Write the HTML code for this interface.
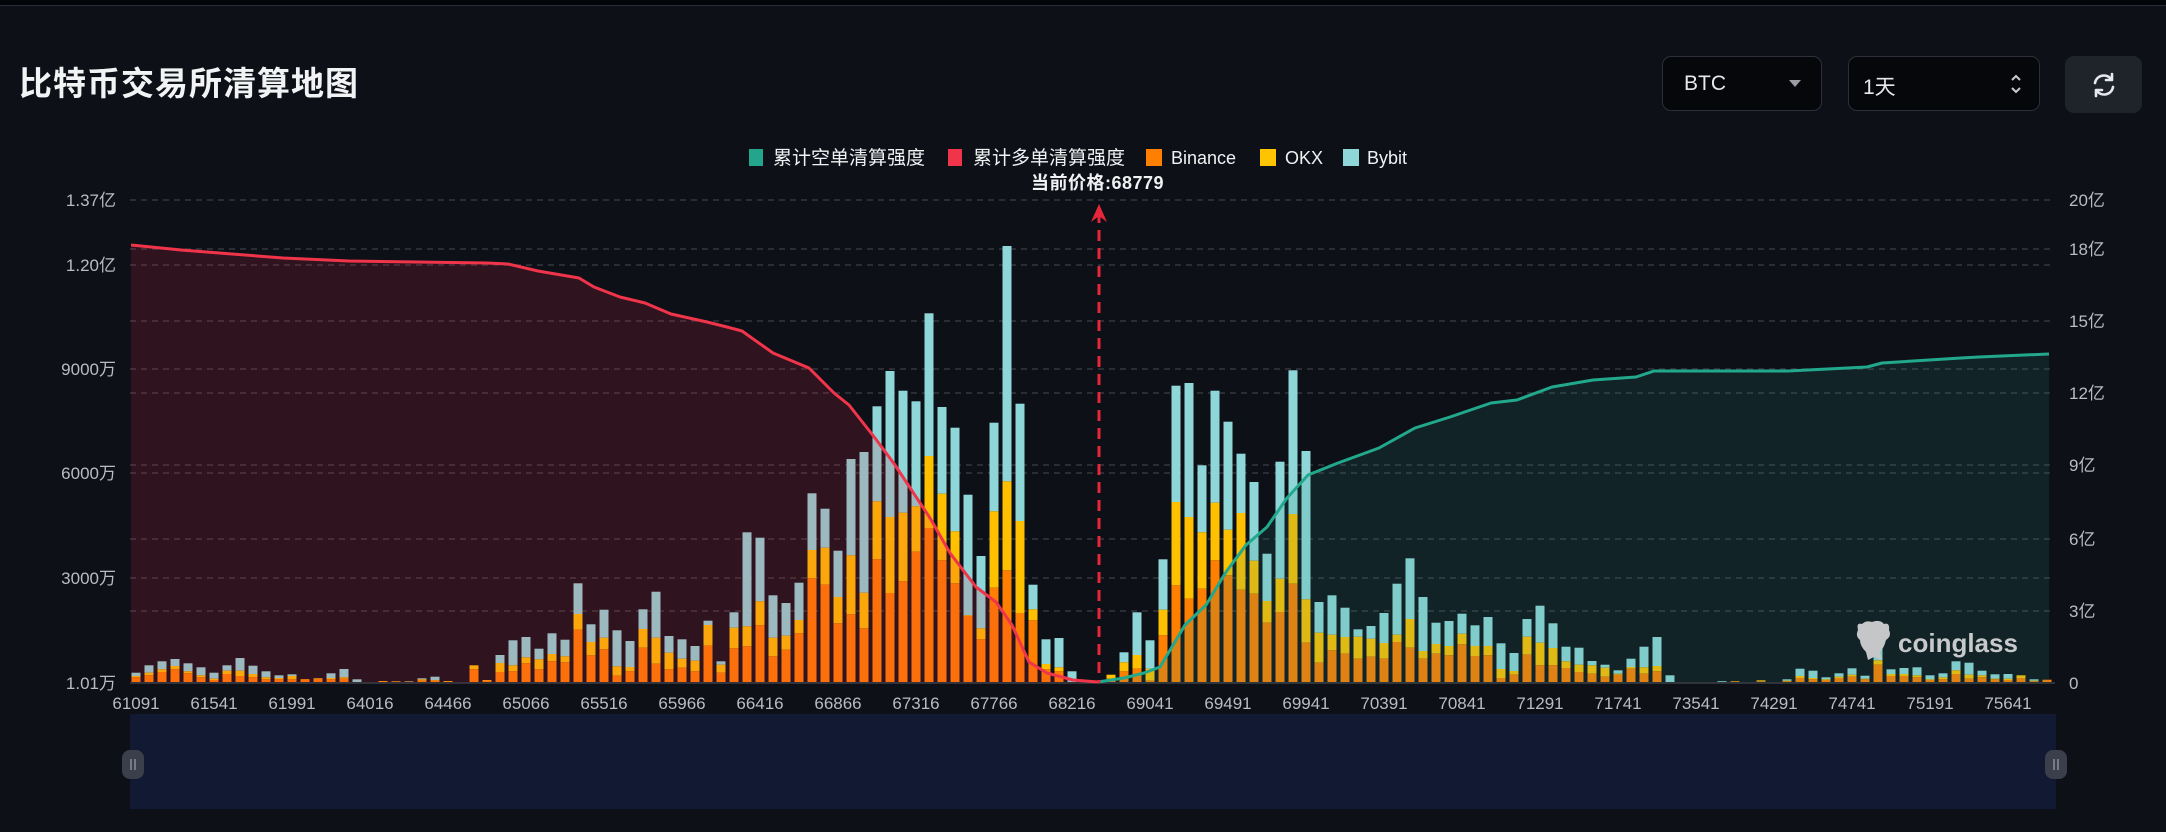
<!DOCTYPE html>
<html><head><meta charset="utf-8">
<style>
html,body{margin:0;padding:0;background:#0d1017;width:2166px;height:832px;overflow:hidden;font-family:"Liberation Sans","Noto Sans CJK SC",sans-serif;}
.topbar{position:absolute;left:0;top:0;width:2166px;height:5px;background:#04050a;border-bottom:1px solid #2a2d35;}
.title{position:absolute;left:19px;top:64px;font-size:33px;font-weight:bold;color:#f2f3f5;letter-spacing:1px;line-height:40px;}
.box{position:absolute;top:56px;height:55px;background:#05070b;border:1px solid #2c3038;border-radius:9px;box-sizing:border-box;color:#e6e8eb;font-size:21px;}
.btn{position:absolute;left:2065px;top:56px;width:77px;height:57px;background:#1f232a;border-radius:9px;}
</style></head><body>
<div class="topbar"></div>
<div class="title">比特币交易所清算地图</div>
<div class="box" style="left:1662px;width:160px;"><span style="position:absolute;left:21px;top:15px;">BTC</span>
<svg style="position:absolute;left:126px;top:23px" width="12" height="8"><path d="M0 0H12L6 7Z" fill="#9a9da4"/></svg></div>
<div class="box" style="left:1848px;width:192px;"><span style="position:absolute;left:14px;top:14px;">1天</span>
<svg style="position:absolute;left:160px;top:14px" width="14" height="26"><path d="M3 9L7 5L11 9M3 17L7 21L11 17" stroke="#c8cbd0" stroke-width="2" fill="none"/></svg></div>
<div class="btn"><svg style="position:absolute;left:25px;top:16px" width="28" height="26" viewBox="0 0 28 26"><path d="M5 11A9 9 0 0 1 21 7M23 15A9 9 0 0 1 7 19" stroke="#e6e8eb" stroke-width="2.6" fill="none" stroke-linecap="round"/><path d="M22 2V8H16" stroke="#e6e8eb" stroke-width="2.6" fill="none" stroke-linecap="round" stroke-linejoin="round"/><path d="M6 24V18H12" stroke="#e6e8eb" stroke-width="2.6" fill="none" stroke-linecap="round" stroke-linejoin="round"/></svg></div>

<svg id="c" style="position:absolute;left:0;top:0" width="2166" height="832" font-family="Liberation Sans, Noto Sans CJK SC, sans-serif">
<g id="grid" stroke="#34373f" stroke-width="1.5" stroke-dasharray="6,5">
<line x1="130" x2="2055" y1="200" y2="200"/><line x1="130" x2="2055" y1="249" y2="249"/><line x1="130" x2="2055" y1="265" y2="265"/><line x1="130" x2="2055" y1="321" y2="321"/><line x1="130" x2="2055" y1="369" y2="369"/><line x1="130" x2="2055" y1="393" y2="393"/><line x1="130" x2="2055" y1="465" y2="465"/><line x1="130" x2="2055" y1="473" y2="473"/><line x1="130" x2="2055" y1="539" y2="539"/><line x1="130" x2="2055" y1="578" y2="578"/><line x1="130" x2="2055" y1="611" y2="611"/>
</g>
<g id="bars"></g>
<path id="redA" fill="rgba(233,36,70,0.16)"/>
<path id="grnA" fill="rgba(40,150,136,0.15)"/>
<line x1="130" x2="2055" y1="683" y2="683" stroke="#3a3d45" stroke-width="1.5"/>
<path id="redL" fill="none" stroke="#f0354a" stroke-width="3" stroke-linejoin="round"/>
<path id="grnL" fill="none" stroke="#22a88c" stroke-width="3" stroke-linejoin="round"/>
<line x1="1099" x2="1099" y1="212" y2="683" stroke="#e8263a" stroke-width="3" stroke-dasharray="11,7"/>
<path d="M1091 222L1099 204L1107 222L1099 216Z" fill="#e8263a"/>
<g fill="#b9bcc3" font-size="17" text-anchor="end">
<text x="116" y="206">1.37亿</text><text x="116" y="271">1.20亿</text><text x="116" y="375">9000万</text><text x="116" y="479">6000万</text><text x="116" y="584">3000万</text><text x="116" y="689">1.01万</text>
</g>
<g fill="#b9bcc3" font-size="17">
<text x="2069" y="206">20亿</text><text x="2069" y="255">18亿</text><text x="2069" y="327">15亿</text><text x="2069" y="399">12亿</text><text x="2069" y="471">9亿</text><text x="2069" y="545">6亿</text><text x="2069" y="617">3亿</text><text x="2069" y="689">0</text>
</g>
<g id="xl" fill="#b9bcc3" font-size="17" text-anchor="middle"></g>
<g font-size="19" fill="#f0f1f3">
<rect x="749" y="149" width="14" height="17" fill="#22a58b"/><text x="773" y="164">累计空单清算强度</text>
<rect x="948" y="149" width="14" height="17" fill="#f0354a"/><text x="973" y="164">累计多单清算强度</text>
<rect x="1146" y="149" width="16" height="17" fill="#ff7f00"/><text x="1171" y="164" font-size="18">Binance</text>
<rect x="1260" y="149" width="16" height="17" fill="#ffc400"/><text x="1285" y="164" font-size="18">OKX</text>
<rect x="1343" y="149" width="16" height="17" fill="#8fd6d8"/><text x="1367" y="164" font-size="18">Bybit</text>
<text x="1031" y="189" font-size="18" font-weight="bold" letter-spacing="0.5">当前价格:68779</text>
</g>
<g fill="#c4c6c8">
<path d="M1858 630Q1856 622 1862 624Q1866 620 1872 622Q1880 619 1884 624Q1890 622 1889 630Q1892 636 1886 640Q1884 648 1880 652L1882 660L1874 657L1868 660L1866 652Q1860 646 1860 640Q1855 636 1858 630Z"/>
<text x="1898" y="652" font-size="26" font-weight="bold" fill="#c8c9cb">coinglass</text>
</g>
<rect x="130" y="714" width="1926" height="95" fill="#121a33"/>
<rect x="122" y="750" width="22" height="29" rx="8" fill="#3a3f4b"/>
<rect x="2045" y="750" width="22" height="29" rx="8" fill="#3a3f4b"/>
<g stroke="#8a8f9a" stroke-width="1.5"><line x1="131" x2="131" y1="759" y2="770"/><line x1="135" x2="135" y1="759" y2="770"/><line x1="2054" x2="2054" y1="759" y2="770"/><line x1="2058" x2="2058" y1="759" y2="770"/></g>
</svg>
<script>
var D=[[9.3,6,4.7],[16.7,9.3,6.7],[20.7,12.7,10],[23,16,12.7],[18.7,10.7,8.7],[14.7,6.7,4.7],[9.3,3.3,2],[16.7,11.3,8],[24,11.3,6],[16.3,8,4.7],
[10.7,4.7,2.7],[6.7,4,2.7],[7.7,6,2.7],[3,3,2.7],[3.7,3.7,3],[8.7,4,2.7],[13,4.7,3.3],[2.7,0,0],[0,0,0],[1,1,0.5],
[0.8,0.8,0.4],[0.8,0.5,0.3],[3.7,2.7,1.3],[5.3,2,1.3],[1,1,0.5],[0,0,0],[16.7,16.7,12.7],[2,2,1.5],[27,19,10],[41.7,16.7,10.7],
[45,24.7,18.7],[33.3,22.7,12.7],[48.7,28,20.7],[42.3,25.7,19.7],[98.7,68,52.3],[57.7,40,26.7],[72.3,44.3,32.7],[51.7,15.7,6.3],[41,15,10.7],[72.7,53,34.3],
[90.3,44.3,18.3],[46,29.3,12.7],[42.7,23.3,14.3],[36,21.3,10.7],[61.3,57,36.3],[20.7,17.3,9.3],[69.7,54.3,33.7],[149.7,55.7,35.7],[144.3,80.7,56.7],[86.7,44.3,25.7],
[79,46.3,32.3],[99.3,62,48.7],[188.7,132,103.7],[173.3,134.3,97.3],[131.3,85,58.7],[223,126.7,67.7],[230,89.3,53.7],[275.7,180.7,122.7],[311,165,89],[291.3,169.3,100.7],
[280.7,175.7,130.3],[368.7,226,154],[275,188.3,121.7],[254.3,150.7,98.7],[187.3,66.7,66],[126,53.7,42.7],[259.3,170.7,94.3],[436,200.7,111.7],[278.3,161,69],[97.3,72.7,61.7],
[42.7,18,12.7],[44,14.7,10.7],[10.7,0,0],[0,0,0],[0,0,0],[7.3,7.3,3.3],[29.7,19.7,10.7],[69.7,27,13.3],[41.7,13.3,1.3],[122.7,72.3,46.7],
[296.3,180,96.7],[299,165,83.3],[216.7,149.7,93.3],[291.3,179.3,121.7],[260.3,152.3,106.7],[228.3,169,92.3],[200,121.3,88.3],[128.3,81,59.3],[220.3,103.3,70],[311.7,168,98.3],
[231,82.7,39.3],[80,49.3,19.3],[86.7,47.3,31.7],[74.3,45,28.3],[52.7,45.3,23.3],[56,43.3,25.3],[69,39,23.3],[98.3,47.3,40],[123.7,63,34.3],[85,31,23.3],
[59.3,38,28.3],[61,36,26.7],[68.3,48.3,37.7],[56.7,36,26],[65,36,26.7],[38.7,13,4],[29,11,7.3],[63,45.3,27.3],[76.3,39.3,16.7],[58.7,34,16.7],
[35.3,20.7,14],[34.3,17.3,10],[21,16.7,8.3],[17.3,14.3,5.3],[11.7,8.3,7.3],[23.3,15,13.3],[35.3,14.7,8.3],[45,16,10.7],[6.7,0,0],[0,0,0],
[0,0,0],[0,0,0],[0.8,0,0],[0.8,0.8,0.5],[0,0,0],[1.7,1.7,0.7],[0,0,0],[2.7,1.3,0.7],[13.3,6,4],[11.3,4,2.7],
[4.7,2.7,2],[8.7,5.3,4],[13.7,7.3,5.3],[6.3,3.3,2.7],[34,21.7,17.3],[12.7,8,6],[14,8,6],[14.7,6.7,4.7],[6.7,2.7,2],[8.7,4.7,2.7],
[20.7,11.7,8],[19.3,7.3,3.3],[11.3,6.7,4.7],[7.7,3.3,2.7],[8,3.3,2],[6.7,6.7,4],[2.7,1.3,0.7],[2.3,2.3,2.3]];
var NS="http://www.w3.org/2000/svg",B=682,g=document.getElementById("bars");
function r(x,y,h,c){if(h<=0)return;var e=document.createElementNS(NS,"rect");e.setAttribute("x",x);e.setAttribute("y",y);e.setAttribute("width",9);e.setAttribute("height",h);e.setAttribute("fill",c);g.appendChild(e);}
D.forEach(function(d,i){var x=131.5+13*i;r(x,B-d[0],d[0]-d[1],"#8fd6d8");r(x,B-d[1],d[1]-d[2],"#ffc000");r(x,B-d[2],d[2],"#ff7f00");});
var L=["61091","61541","61991","64016","64466","65066","65516","65966","66416","66866","67316","67766","68216","69041","69491","69941","70391","70841","71291","71741","73541","74291","74741","75191","75641"];
var xl=document.getElementById("xl");L.forEach(function(t,k){var e=document.createElementNS(NS,"text");e.setAttribute("x",136+78*k);e.setAttribute("y",709);e.textContent=t;xl.appendChild(e);});
var R=[[131,245],[181,250],[232,254],[283,258],[349,261],[487,263],[508,264],[538,271],[579,278],[594,287],[620,297],[645,303],[671,314],[707,322],[727,327],[742,331],[773,353],[809,368],[834,393],[849,405],[875,438],[895,465],[930,518],[950,553],[976,587],[996,602],[1012,625],[1029,662],[1047,673],[1073,680],[1098,682]];
var G=[[1098,682],[1124,678],[1144,673],[1160,667],[1185,625],[1206,605],[1226,572],[1246,545],[1267,527],[1287,498],[1308,475],[1338,463],[1379,448],[1415,428],[1450,417],[1491,403],[1517,400],[1552,387],[1593,380],[1636,377],[1654,371],[1788,371],[1867,367],[1882,363],[1961,358],[1979,357],[2049,354]];
function p(a){return a.map(function(q,i){return (i?"L":"M")+q[0]+" "+q[1];}).join("");}
document.getElementById("redL").setAttribute("d",p(R));
document.getElementById("grnL").setAttribute("d",p(G));
document.getElementById("redA").setAttribute("d",p(R)+"L1098 683L131 683Z");
document.getElementById("grnA").setAttribute("d",p(G)+"L2049 683L1098 683Z");
</script>
</body></html>
